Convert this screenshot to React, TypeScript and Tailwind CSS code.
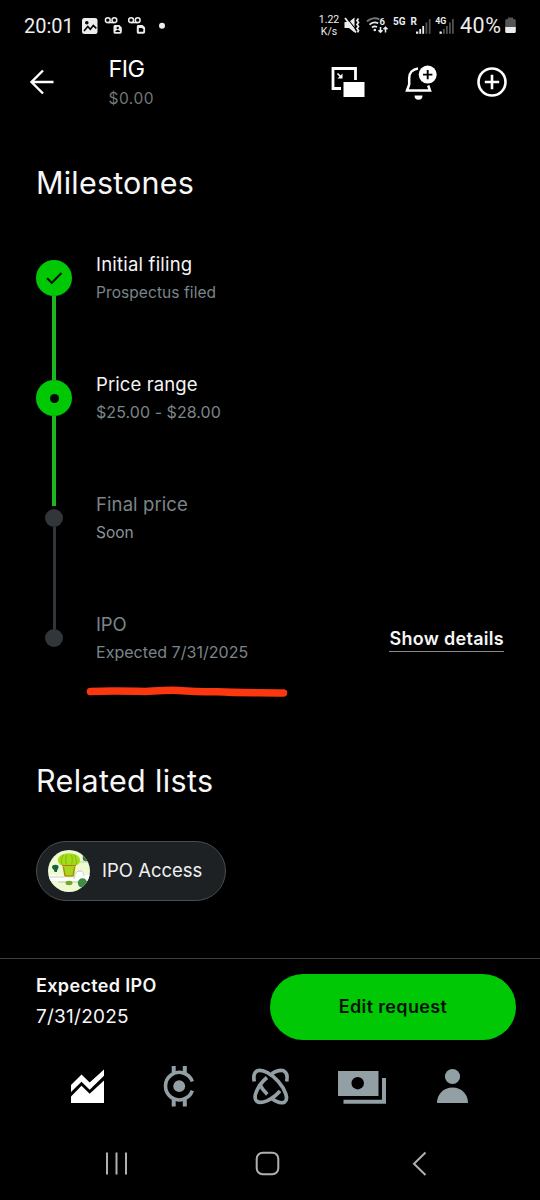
import React from "react";

function StatusBar() {
  return (
    <div className="flex h-[50px] w-full shrink-0 items-center pl-[24px] font-['Roboto',sans-serif] text-[#ededed]">
      <span className="w-[56px] pt-[2px] text-[20px] leading-[24px]">20:01</span>
      <svg width="90" height="24" viewBox="80 13 90 24" fill="none">
        <rect x="82" y="18" width="15.5" height="16" rx="2.5" fill="#ededed" />
        <circle cx="86.8" cy="22.8" r="1.8" fill="#000" />
        <path d="M84 31l3.8-4.6 2.5 2.8 3-3.8 3 3" stroke="#000" strokeWidth="1.6" />
        {[0, 23.3].map((dx) => (
          <g key={dx} transform={`translate(${dx} 0)`}>
            <circle cx="107.8" cy="20.2" r="2.4" stroke="#ededed" strokeWidth="1.5" />
            <circle cx="114.4" cy="20.2" r="2.4" stroke="#ededed" strokeWidth="1.5" />
            <path d="M107.8 22.6h6.6" stroke="#ededed" strokeWidth="1.4" />
            <path d="M114.8 25h4.5l2.5 2.5V32a1.7 1.7 0 0 1-1.7 1.7h-5.3A1.5 1.5 0 0 1 113.5 32v-5.5a1.5 1.5 0 0 1 1.3-1.5z" fill="#ededed" />
          </g>
        ))}
        <circle cx="117.7" cy="28" r="1.2" fill="#000" />
        <path d="M115.3 32c.3-2.7 4.5-2.7 4.8 0z" fill="#000" />
        <path d="M138.8 28h3.2l1.2 1.2v2.6h-4.4z" fill="#000" />
        <circle cx="162" cy="25.7" r="3" fill="#ededed" />
      </svg>
      <div className="ml-[149px] flex w-[20px] flex-col items-center pt-[2px] text-[10.5px] leading-[12px]">
        <span>1.22</span>
        <span>K/s</span>
      </div>
      <svg className="ml-[3px]" width="50" height="24" viewBox="342 13 50 24" fill="none">
        <path d="M344.5 22h4.5l5.5-4.5v15l-5.5-4.5h-4.5z" fill="#ededed" />
        <path d="M346.8 18l10 12.5" stroke="#000" strokeWidth="1.2" />
        <path d="M345 18l11 14.5" stroke="#ededed" strokeWidth="1.8" />
        <path d="M358.5 18.5l-1.5 2 1.5 2-1.5 2 1.5 2-1.5 2 1.5 2-1 1.8" stroke="#ededed" strokeWidth="1.7" />
        <path d="M367 21.5c3.7-3.7 9-4 12.5-2" stroke="#777" strokeWidth="1.8" />
        <path d="M369.5 24.7c2.5-2.5 6-2.8 8.7-1.4M372 27.5c1.5-1.3 3.5-1.4 5-.5" stroke="#ededed" strokeWidth="1.7" />
        <circle cx="374.8" cy="30" r="1.3" fill="#ededed" />
        <path d="M380.5 27v5M378.5 30.3l2 2 2-2M385.5 32.5v-5M383.5 29.2l2-2 2 2" stroke="#ededed" strokeWidth="1.5" />
        <text x="379.5" y="25" fill="#ededed" fontSize="9.5" fontWeight="700" fontFamily="Roboto">6</text>
      </svg>
      <svg width="66" height="24" viewBox="392 13 66 24">
        <g fill="#ededed" fontFamily="Roboto" fontWeight="700">
          <text x="393" y="25" fontSize="10">5G</text>
          <text x="410.5" y="25" fontSize="10">R</text>
          <text x="435.2" y="24" fontSize="8.8">4G</text>
          <rect x="416" y="31.5" width="2.3" height="2.3" />
          <rect x="419.3" y="29" width="1.8" height="4.8" />
          <rect x="422.3" y="26" width="1.8" height="7.8" />
          <rect x="439.5" y="31.5" width="2.3" height="2.3" />
        </g>
        <g fill="#505050">
          <rect x="425.5" y="22.5" width="1.8" height="11.3" />
          <rect x="428.8" y="19" width="1.8" height="14.8" />
          <rect x="443" y="29" width="1.8" height="4.8" />
          <rect x="446" y="26" width="1.8" height="7.8" />
          <rect x="449" y="22.5" width="1.8" height="11.3" />
          <rect x="452" y="19" width="1.8" height="14.8" />
        </g>
      </svg>
      <span className="ml-[2px] w-[45px] pt-[2px] text-[21.5px] leading-[24px] tracking-[0.5px]">40%</span>
      <svg width="11" height="18" viewBox="0 -1 11 18">
        <path d="M3 2V.6h5V2h1.2A1.6 1.6 0 0 1 10.8 3.6V10H.2V3.6A1.6 1.6 0 0 1 1.8 2z" fill="#555" />
        <path d="M.2 10h10.6v4.5a1.5 1.5 0 0 1-1.5 1.5H1.7a1.5 1.5 0 0 1-1.5-1.5z" fill="#ededed" />
      </svg>
    </div>
  );
}

function Header() {
  return (
    <header className="flex h-[65px] shrink-0 pl-[28px]">
      <svg className="mt-[17px]" width="30" height="30" viewBox="28.5 67 30 30" fill="none" stroke="#fff" strokeWidth="2.4">
        <path d="M54 82H31.5M43.5 70.5L32 82l11.5 11.5" />
      </svg>
      <div className="ml-[50.5px] mt-[5px] flex w-[221.5px] flex-col">
        <span className="text-[23.5px] leading-[28px] tracking-[-0.6px] text-white">FIG</span>
        <span className="mt-[5px] pt-[1px] text-[15.5px] leading-[20px] tracking-[0.5px] text-[#70787c]">$0.00</span>
      </div>
      <svg className="mt-[10px]" width="184" height="44" viewBox="330 60 184 44" fill="none">
        <path d="M341 88.5h-8V68.5h22.5V80" stroke="#fff" strokeWidth="2.8" />
        <rect x="343.5" y="82" width="21" height="15" fill="#fff" />
        <path d="M337.5 73.5l3.5 3.5" stroke="#fff" strokeWidth="1.6" />
        <path d="M342.5 73.5v5h-5z" fill="#fff" />
        <path d="M418 68.5c-5.5.7-8.8 4.5-8.8 9.5v6.5l-2.2 6h23l-1.8-5" stroke="#fff" strokeWidth="2.5" />
        <path d="M414.5 95.5h8a4 4.2 0 0 1-8 0z" fill="#fff" />
        <circle cx="427.7" cy="74.6" r="9" fill="#fff" />
        <path d="M423 74.6h9.4M427.7 69.9v9.4" stroke="#000" strokeWidth="1.9" />
        <circle cx="492" cy="82" r="13.5" stroke="#fff" strokeWidth="2.6" />
        <path d="M484.8 82h14.4M492 74.8v14.4" stroke="#fff" strokeWidth="2.6" />
      </svg>
    </header>
  );
}

function Timeline() {
  return (
    <section className="mt-[49px] flex h-[480px]">
      <div className="flex w-[36px] flex-col items-center pt-[8px]">
        <div className="flex size-[36px] items-center justify-center rounded-full bg-[#00c805]">
          <svg width="18" height="14" viewBox="0 0 18 14" fill="none" stroke="#061006" strokeWidth="2">
            <path d="M2 7.2l4.8 4.6L16.5 2" />
          </svg>
        </div>
        <div className="h-[84px] w-[3.5px] bg-[#1db522]" />
        <div className="flex size-[36px] items-center justify-center rounded-full bg-[#00c805]">
          <div className="size-[9px] rounded-full bg-[#030a03]" />
        </div>
        <div className="h-[90px] w-[3.5px] bg-[#1db522]" />
        <div className="mt-[3px] size-[18px] rounded-full bg-[#30363a]" />
        <div className="h-[102px] w-[3px] bg-[#30363a]" />
        <div className="size-[18px] rounded-full bg-[#30363a]" />
      </div>
      <div className="ml-[24px] flex flex-col">
        <div className="flex h-[120px] flex-col">
          <span className="text-[18.5px] leading-[24px] tracking-[0.2px] text-[#f5f5f5]">Initial filing</span>
          <span className="mt-[7px] text-[15.5px] leading-[20px] tracking-[0.08px] text-[#7b858a]">Prospectus filed</span>
        </div>
        <div className="flex h-[120px] flex-col">
          <span className="text-[18.5px] leading-[24px] tracking-[0.1px] text-[#f5f5f5]">Price range</span>
          <span className="mt-[6px] text-[16px] leading-[20px] tracking-[0.06px] text-[#7b858a]">$25.00 - $28.00</span>
        </div>
        <div className="flex h-[120px] flex-col">
          <span className="text-[18.5px] leading-[24px] tracking-[0.1px] text-[#7b858a]">Final price</span>
          <span className="mt-[7px] text-[15.5px] leading-[20px] text-[#8b9499]">Soon</span>
        </div>
        <div className="flex h-[120px] flex-col">
          <span className="text-[18.5px] leading-[24px] tracking-[-0.1px] text-[#7b858a]">IPO</span>
          <span className="mt-[6px] text-[16px] leading-[20px] tracking-[0.03px] text-[#7b858a]">Expected 7/31/2025</span>
        </div>
      </div>
      <button className="ml-auto mt-[373px] h-[27px] self-start whitespace-nowrap border-b border-[#8a8a8a] text-[18px] font-semibold leading-[27px] tracking-[0.3px] text-[#f5f5f5]">
        Show details
      </button>
    </section>
  );
}

function BalloonAvatar() {
  return (
    <svg width="42" height="42" viewBox="0 0 42 42">
      <defs>
        <clipPath id="avatar"><circle cx="21" cy="21" r="21" /></clipPath>
      </defs>
      <g clipPath="url(#avatar)">
        <rect width="42" height="42" fill="#effad2" />
        <path d="M0 27c2-3 6-3 8-1 4-2 9 0 11 2h9c-1-4 1-7 5-7 3 0 4 2 4 4h5v6H0z" fill="#fff" />
        <path d="M0 27h17M26 29c0-5 2-8 6-8 3 0 4 2 4 5M10 32h32M25 12h16" stroke="#a9bca8" strokeWidth=".7" fill="none" />
        <path d="M13 15c-3-1-4-6-2-8 4-5 16-5 20 0 2 3 1 7-2 8z" fill="#a3dc18" />
        <path d="M14 15c-1-4-1-8 2-10M18.5 15c-1-4-1-7 0-10M23.5 15c1-4 1-7 0-10M28 15c1-4 0-8-2-10" stroke="#78ae0d" strokeWidth=".8" fill="none" />
        <path d="M14 14.5h14l-2 12H16.5z" fill="#a5d81b" />
        <path d="M14 15.5h14M15.5 17l1.5 9h8l1.5-9" stroke="#b6701f" strokeWidth="1" fill="none" />
        <path d="M4 17c0-3 7-3 6.5 0 0 2-1.5 2-1.5 5H6.5c0-3-2.5-3-2.5-5z" fill="#14633b" />
        <ellipse cx="21" cy="33" rx="3.5" ry="2.2" fill="#71a92a" />
        <circle cx="34.5" cy="33" r="4.7" fill="#3f8c45" />
        <circle cx="38" cy="8" r="3.3" fill="#32783c" />
      </g>
    </svg>
  );
}

function TabBar() {
  return (
    <svg className="mt-[20px] shrink-0" width="540" height="50" viewBox="0 1061 540 50" fill="none">
      <path d="M71 1103v-6.5l10.5-10.7 8.2 8 14.3-13.3V1103z" fill="#fff" />
      <path d="M71 1092v-7l10.5-10.5 8.2 8 14.3-13v6.3l-14.3 14-8.2-8z" fill="#fff" />
      <g stroke="#929fa5" strokeWidth="4">
        <path d="M192.3 1081.5a13.8 13.8 0 1 0 0 9.2" strokeWidth="3.6" />
        <path d="M173.7 1066v7M184.8 1066v7M173.7 1099.5v7M184.8 1099.5v7" />
      </g>
      <circle cx="179.2" cy="1086.2" r="5.9" fill="#929fa5" />
      <g stroke="#929fa5" strokeWidth="3.7">
        <path d="M254.3 1081.5c-1-5-.5-9 3-10.7 5.5-2 14.5 3.5 21 10.7 7 8 10.5 17.5 6.5 20.3-3.3 2-8.5.2-13.5-3.8" />
        <path d="M286.7 1081.5c1-5 .5-9-3-10.7-3.5-1.2-7.5 0-12 3" />
        <path d="M267 1077.5c-9 7.5-14.5 19.5-10.5 23.5 4.5 4 15.5-1 23.5-10" />
        <path d="M259.3 1083.5c1.8 4 4.5 7.5 8 10.8" />
      </g>
      <rect x="338" y="1071" width="40.5" height="25" fill="#929fa5" />
      <circle cx="357.7" cy="1083.2" r="6.2" fill="#000" />
      <path d="M384 1078v23.7h-40.5" stroke="#929fa5" strokeWidth="4" />
      <circle cx="452.5" cy="1076.5" r="7.6" fill="#929fa5" />
      <path d="M437 1103c0-9 6.5-15.5 15.5-15.5s15.5 6.5 15.5 15.5z" fill="#929fa5" />
    </svg>
  );
}

function SystemNav() {
  return (
    <svg className="mt-[29px] shrink-0" width="540" height="48" viewBox="0 1140 540 48" fill="none" stroke="#b0b0b0" strokeWidth="2">
      <path d="M107 1152.5v22M116.5 1152.5v22M126 1152.5v22" />
      <rect x="256.7" y="1152.8" width="21.6" height="21.4" rx="6" />
      <path d="M425.5 1152.5L414 1163.8l11.5 11.2" />
    </svg>
  );
}

export default function App() {
  return (
    <div className="relative flex h-[1200px] w-[540px] flex-col overflow-hidden bg-black font-['Inter',sans-serif]">
      <StatusBar />
      <Header />
      <main className="flex h-[843px] shrink-0 flex-col px-[36px] pt-[48px]">
        <h2 className="text-[30.5px] leading-[40px] tracking-[0.2px] text-[#f7f7f7]">Milestones</h2>
        <Timeline />
        <h2 className="mt-[29px] text-[30.5px] leading-[40px] tracking-[0.35px] text-[#f7f7f7]">Related lists</h2>
        <div className="mt-[39.5px] flex h-[60px] w-[190px] items-center rounded-full border border-[#484d50] bg-[#1e2124] pl-[11px]">
          <BalloonAvatar />
          <span className="ml-[12px] whitespace-nowrap pb-[2px] text-[18.5px] leading-[24px] text-[#f0f0f0]">IPO Access</span>
        </div>
      </main>
      <div className="flex h-[83px] shrink-0 items-start justify-between border-t border-[#3a3f41] pl-[36px] pr-[24px] pt-[15px]">
        <div className="flex flex-col whitespace-nowrap text-[#f7f7f7]">
          <span className="text-[18px] font-semibold leading-[24px] tracking-[0.35px]">Expected IPO</span>
          <span className="mt-[7px] text-[19px] leading-[24px] tracking-[0.25px]">7/31/2025</span>
        </div>
        <button className="h-[66px] w-[246px] rounded-full bg-[#00c805] text-[18px] font-semibold leading-[24px] tracking-[0.35px] text-[#031203]">
          Edit request
        </button>
      </div>
      <TabBar />
      <SystemNav />
      <svg className="absolute left-[84px] top-[680px]" width="208" height="22" viewBox="84 680 208 22" fill="none">
        <path d="M90.5 691.5c20-.8 37-.4 55 .1 12-.7 20-1.7 33-1.1 14 1.2 22 1.3 39 1.3 20 1.3 43 .7 66 1.2" stroke="#fb3710" strokeWidth="7.5" strokeLinecap="round" />
      </svg>
    </div>
  );
}
